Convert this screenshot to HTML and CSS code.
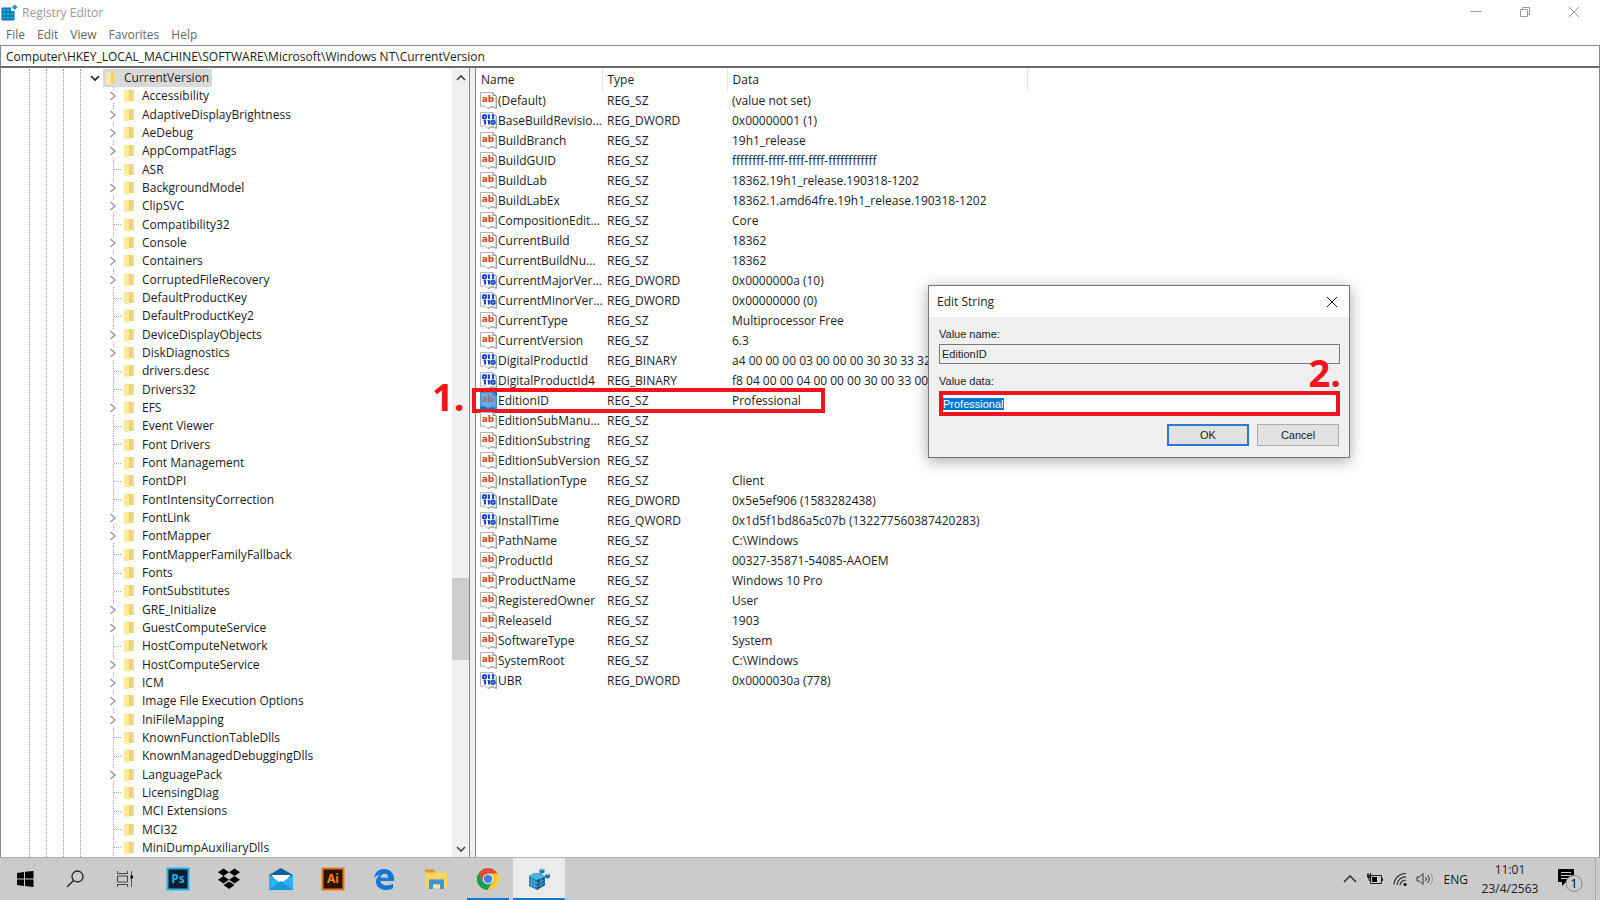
FILE: index.html
```html
<!DOCTYPE html>
<html lang="en">
<head>
  <meta charset="utf-8">
  <title>Registry Editor</title>
  <link rel="stylesheet" href="styles.css">
</head>
<body>
  <!-- shared icons -->
  <svg class="defs" aria-hidden="true">
    <symbol id="folder" viewBox="0 0 12 16">
      <path d="M1 2h10v11H1z" fill="#f6cf66"/>
      <path d="M1 1.500l5 1V15l-5-1.500z" fill="#ffe9a3"/>
      <path d="M9 2h2v11H9z" fill="#fbdc85"/>
    </symbol>
    <symbol id="right" viewBox="0 0 10 12">
      <path d="M2.500 2l4.500 4-4.500 4" fill="none" stroke="#999" stroke-width="1.500"/>
    </symbol>
    <symbol id="down" viewBox="0 0 10 10">
      <path d="M1 3l4 4 4-4" fill="none" stroke="currentColor" stroke-width="1.600"/>
    </symbol>
    <symbol id="up" viewBox="0 0 10 10">
      <path d="M1 7l4-4 4 4" fill="none" stroke="currentColor" stroke-width="1.600"/>
    </symbol>
    <symbol id="close" viewBox="0 0 12 12">
      <path d="M1 1l10 10M11 1L1 11" fill="none" stroke="currentColor"/>
    </symbol>
    <symbol id="page" viewBox="0 0 17 17">
      <path d="M.500.500h12.500l3 3v12.500c-2-.500-2.500-1.500-4-1.500s-2 1.500-4 1.500-2.500-2-4.500-2l-3 .500z" fill="#fafafa" stroke="#b4b4b4"/>
      <path d="M13 .500v3h3" fill="#ddd" stroke="#909090"/>
      <path d="M16.500 4v12.500c-2-.500-3-1.500-4.500-1.500s-2 1.500-4 1.500" fill="none" stroke="#a0a0a0"/>
    </symbol>
    <symbol id="bits" viewBox="0 0 17 17">
      <use href="#page"/>
      <g fill="none" stroke="#1a49d0" stroke-width="2">
        <circle cx="4.500" cy="4.700" r="1.700"/>
        <circle cx="13" cy="10.300" r="1.700"/>
        <path d="M9 2.500v4.500M13 2.500v4.500M5 8v4.500M9 8v4.500"/>
        <path d="M7.500 3H9M11.500 3H13M3.500 8.500H5M7.500 8.500H9" stroke-width="1"/>
      </g>
    </symbol>
  </svg>

  <header class="titlebar">
    <svg class="app-icon" viewBox="0 0 17 17">
      <path d="M1 4h12v12H1z" fill="#1aa7e0"/>
      <path d="M5 4v12M9 4v12M1 8h12M1 12h12M1 4h12v12H1z" fill="none" stroke="#0b6293"/>
      <path d="M10 3h4v4h-4z" fill="#fff"/>
      <path d="M13.500.500l3 2.500-2.500 3-3-2.500z" fill="#2b8fd0"/>
    </svg>
    <h1>Registry Editor</h1>
    <div class="window-buttons">
      <button aria-label="Minimize"><svg viewBox="0 0 12 12"><path d="M1 5.500h10" stroke="currentColor"/></svg></button>
      <button aria-label="Restore"><svg viewBox="0 0 12 12"><path d="M1.500 3.500h7v7h-7zM3.500 3.500v-2h7v7h-2" fill="none" stroke="currentColor"/></svg></button>
      <button aria-label="Close"><svg viewBox="0 0 12 12"><use href="#close"/></svg></button>
    </div>
  </header>

  <nav class="menubar">
    <button>File</button>
    <button>Edit</button>
    <button>View</button>
    <button>Favorites</button>
    <button>Help</button>
  </nav>

  <input class="address" type="text" aria-label="Address" value="Computer\HKEY_LOCAL_MACHINE\SOFTWARE\Microsoft\Windows NT\CurrentVersion">

  <main class="panes">
    <section class="tree-pane">
      <div class="guides"><i></i><i></i><i></i><i></i></div>
      <ul class="tree">
        <li class="root"><button aria-label="Collapse"><svg><use href="#down"/></svg></button><span class="key"><svg class="folder"><use href="#folder"/></svg>CurrentVersion</span></li>
        <li><button aria-label="Expand"><svg><use href="#right"/></svg></button><svg class="folder"><use href="#folder"/></svg>Accessibility</li>
        <li><button aria-label="Expand"><svg><use href="#right"/></svg></button><svg class="folder"><use href="#folder"/></svg>AdaptiveDisplayBrightness</li>
        <li><button aria-label="Expand"><svg><use href="#right"/></svg></button><svg class="folder"><use href="#folder"/></svg>AeDebug</li>
        <li><button aria-label="Expand"><svg><use href="#right"/></svg></button><svg class="folder"><use href="#folder"/></svg>AppCompatFlags</li>
        <li><i class="leaf"></i><svg class="folder"><use href="#folder"/></svg>ASR</li>
        <li><button aria-label="Expand"><svg><use href="#right"/></svg></button><svg class="folder"><use href="#folder"/></svg>BackgroundModel</li>
        <li><button aria-label="Expand"><svg><use href="#right"/></svg></button><svg class="folder"><use href="#folder"/></svg>ClipSVC</li>
        <li><i class="leaf"></i><svg class="folder"><use href="#folder"/></svg>Compatibility32</li>
        <li><button aria-label="Expand"><svg><use href="#right"/></svg></button><svg class="folder"><use href="#folder"/></svg>Console</li>
        <li><button aria-label="Expand"><svg><use href="#right"/></svg></button><svg class="folder"><use href="#folder"/></svg>Containers</li>
        <li><button aria-label="Expand"><svg><use href="#right"/></svg></button><svg class="folder"><use href="#folder"/></svg>CorruptedFileRecovery</li>
        <li><i class="leaf"></i><svg class="folder"><use href="#folder"/></svg>DefaultProductKey</li>
        <li><i class="leaf"></i><svg class="folder"><use href="#folder"/></svg>DefaultProductKey2</li>
        <li><button aria-label="Expand"><svg><use href="#right"/></svg></button><svg class="folder"><use href="#folder"/></svg>DeviceDisplayObjects</li>
        <li><button aria-label="Expand"><svg><use href="#right"/></svg></button><svg class="folder"><use href="#folder"/></svg>DiskDiagnostics</li>
        <li><i class="leaf"></i><svg class="folder"><use href="#folder"/></svg>drivers.desc</li>
        <li><i class="leaf"></i><svg class="folder"><use href="#folder"/></svg>Drivers32</li>
        <li><button aria-label="Expand"><svg><use href="#right"/></svg></button><svg class="folder"><use href="#folder"/></svg>EFS</li>
        <li><i class="leaf"></i><svg class="folder"><use href="#folder"/></svg>Event Viewer</li>
        <li><i class="leaf"></i><svg class="folder"><use href="#folder"/></svg>Font Drivers</li>
        <li><i class="leaf"></i><svg class="folder"><use href="#folder"/></svg>Font Management</li>
        <li><i class="leaf"></i><svg class="folder"><use href="#folder"/></svg>FontDPI</li>
        <li><i class="leaf"></i><svg class="folder"><use href="#folder"/></svg>FontIntensityCorrection</li>
        <li><button aria-label="Expand"><svg><use href="#right"/></svg></button><svg class="folder"><use href="#folder"/></svg>FontLink</li>
        <li><button aria-label="Expand"><svg><use href="#right"/></svg></button><svg class="folder"><use href="#folder"/></svg>FontMapper</li>
        <li><i class="leaf"></i><svg class="folder"><use href="#folder"/></svg>FontMapperFamilyFallback</li>
        <li><i class="leaf"></i><svg class="folder"><use href="#folder"/></svg>Fonts</li>
        <li><i class="leaf"></i><svg class="folder"><use href="#folder"/></svg>FontSubstitutes</li>
        <li><button aria-label="Expand"><svg><use href="#right"/></svg></button><svg class="folder"><use href="#folder"/></svg>GRE_Initialize</li>
        <li><button aria-label="Expand"><svg><use href="#right"/></svg></button><svg class="folder"><use href="#folder"/></svg>GuestComputeService</li>
        <li><i class="leaf"></i><svg class="folder"><use href="#folder"/></svg>HostComputeNetwork</li>
        <li><button aria-label="Expand"><svg><use href="#right"/></svg></button><svg class="folder"><use href="#folder"/></svg>HostComputeService</li>
        <li><button aria-label="Expand"><svg><use href="#right"/></svg></button><svg class="folder"><use href="#folder"/></svg>ICM</li>
        <li><button aria-label="Expand"><svg><use href="#right"/></svg></button><svg class="folder"><use href="#folder"/></svg>Image File Execution Options</li>
        <li><button aria-label="Expand"><svg><use href="#right"/></svg></button><svg class="folder"><use href="#folder"/></svg>IniFileMapping</li>
        <li><i class="leaf"></i><svg class="folder"><use href="#folder"/></svg>KnownFunctionTableDlls</li>
        <li><i class="leaf"></i><svg class="folder"><use href="#folder"/></svg>KnownManagedDebuggingDlls</li>
        <li><button aria-label="Expand"><svg><use href="#right"/></svg></button><svg class="folder"><use href="#folder"/></svg>LanguagePack</li>
        <li><i class="leaf"></i><svg class="folder"><use href="#folder"/></svg>LicensingDiag</li>
        <li><i class="leaf"></i><svg class="folder"><use href="#folder"/></svg>MCI Extensions</li>
        <li><i class="leaf"></i><svg class="folder"><use href="#folder"/></svg>MCI32</li>
        <li><i class="leaf"></i><svg class="folder"><use href="#folder"/></svg>MiniDumpAuxiliaryDlls</li>
      </ul>
      <div class="scrollbar">
        <button aria-label="Scroll up"><svg><use href="#up"/></svg></button>
        <div class="track"><div class="thumb"></div></div>
        <button aria-label="Scroll down"><svg><use href="#down"/></svg></button>
      </div>
    </section>

    <section class="value-pane">
      <table class="values">
        <colgroup><col class="col-name"><col class="col-type"><col class="col-data"></colgroup>
        <thead>
          <tr><th>Name</th><th>Type</th><th>Data</th></tr>
        </thead>
        <tbody>
          <tr><td><svg><use href="#page"/><text x="8" y="10" class="ab">ab</text></svg>(Default)</td><td>REG_SZ</td><td>(value not set)</td></tr>
          <tr><td><svg><use href="#bits"/></svg>BaseBuildRevisio...</td><td>REG_DWORD</td><td>0x00000001 (1)</td></tr>
          <tr><td><svg><use href="#page"/><text x="8" y="10" class="ab">ab</text></svg>BuildBranch</td><td>REG_SZ</td><td>19h1_release</td></tr>
          <tr><td><svg><use href="#page"/><text x="8" y="10" class="ab">ab</text></svg>BuildGUID</td><td>REG_SZ</td><td>ffffffff-ffff-ffff-ffff-ffffffffffff</td></tr>
          <tr><td><svg><use href="#page"/><text x="8" y="10" class="ab">ab</text></svg>BuildLab</td><td>REG_SZ</td><td>18362.19h1_release.190318-1202</td></tr>
          <tr><td><svg><use href="#page"/><text x="8" y="10" class="ab">ab</text></svg>BuildLabEx</td><td>REG_SZ</td><td>18362.1.amd64fre.19h1_release.190318-1202</td></tr>
          <tr><td><svg><use href="#page"/><text x="8" y="10" class="ab">ab</text></svg>CompositionEdit...</td><td>REG_SZ</td><td>Core</td></tr>
          <tr><td><svg><use href="#page"/><text x="8" y="10" class="ab">ab</text></svg>CurrentBuild</td><td>REG_SZ</td><td>18362</td></tr>
          <tr><td><svg><use href="#page"/><text x="8" y="10" class="ab">ab</text></svg>CurrentBuildNu...</td><td>REG_SZ</td><td>18362</td></tr>
          <tr><td><svg><use href="#bits"/></svg>CurrentMajorVer...</td><td>REG_DWORD</td><td>0x0000000a (10)</td></tr>
          <tr><td><svg><use href="#bits"/></svg>CurrentMinorVer...</td><td>REG_DWORD</td><td>0x00000000 (0)</td></tr>
          <tr><td><svg><use href="#page"/><text x="8" y="10" class="ab">ab</text></svg>CurrentType</td><td>REG_SZ</td><td>Multiprocessor Free</td></tr>
          <tr><td><svg><use href="#page"/><text x="8" y="10" class="ab">ab</text></svg>CurrentVersion</td><td>REG_SZ</td><td>6.3</td></tr>
          <tr><td><svg><use href="#bits"/></svg>DigitalProductId</td><td>REG_BINARY</td><td>a4 00 00 00 03 00 00 00 30 30 33 32</td></tr>
          <tr><td><svg><use href="#bits"/></svg>DigitalProductId4</td><td>REG_BINARY</td><td>f8 04 00 00 04 00 00 00 30 00 33 00</td></tr>
          <tr class="selected"><td><svg><use href="#page"/><text x="8" y="10" class="ab">ab</text></svg>EditionID<span class="step step-one">1.</span><span class="outline"></span></td><td>REG_SZ</td><td>Professional</td></tr>
          <tr><td><svg><use href="#page"/><text x="8" y="10" class="ab">ab</text></svg>EditionSubManu...</td><td>REG_SZ</td><td></td></tr>
          <tr><td><svg><use href="#page"/><text x="8" y="10" class="ab">ab</text></svg>EditionSubstring</td><td>REG_SZ</td><td></td></tr>
          <tr><td><svg><use href="#page"/><text x="8" y="10" class="ab">ab</text></svg>EditionSubVersion</td><td>REG_SZ</td><td></td></tr>
          <tr><td><svg><use href="#page"/><text x="8" y="10" class="ab">ab</text></svg>InstallationType</td><td>REG_SZ</td><td>Client</td></tr>
          <tr><td><svg><use href="#bits"/></svg>InstallDate</td><td>REG_DWORD</td><td>0x5e5ef906 (1583282438)</td></tr>
          <tr><td><svg><use href="#bits"/></svg>InstallTime</td><td>REG_QWORD</td><td>0x1d5f1bd86a5c07b (132277560387420283)</td></tr>
          <tr><td><svg><use href="#page"/><text x="8" y="10" class="ab">ab</text></svg>PathName</td><td>REG_SZ</td><td>C:\Windows</td></tr>
          <tr><td><svg><use href="#page"/><text x="8" y="10" class="ab">ab</text></svg>ProductId</td><td>REG_SZ</td><td>00327-35871-54085-AAOEM</td></tr>
          <tr><td><svg><use href="#page"/><text x="8" y="10" class="ab">ab</text></svg>ProductName</td><td>REG_SZ</td><td>Windows 10 Pro</td></tr>
          <tr><td><svg><use href="#page"/><text x="8" y="10" class="ab">ab</text></svg>RegisteredOwner</td><td>REG_SZ</td><td>User</td></tr>
          <tr><td><svg><use href="#page"/><text x="8" y="10" class="ab">ab</text></svg>ReleaseId</td><td>REG_SZ</td><td>1903</td></tr>
          <tr><td><svg><use href="#page"/><text x="8" y="10" class="ab">ab</text></svg>SoftwareType</td><td>REG_SZ</td><td>System</td></tr>
          <tr><td><svg><use href="#page"/><text x="8" y="10" class="ab">ab</text></svg>SystemRoot</td><td>REG_SZ</td><td>C:\Windows</td></tr>
          <tr><td><svg><use href="#bits"/></svg>UBR</td><td>REG_DWORD</td><td>0x0000030a (778)</td></tr>
        </tbody>
      </table>
    </section>
  </main>

  <form class="dialog" role="dialog" aria-labelledby="dialog-title">
    <div class="dialog-title">
      <h2 id="dialog-title">Edit String</h2>
      <button type="button" aria-label="Close"><svg viewBox="0 0 12 12"><use href="#close"/></svg></button>
    </div>
    <div class="dialog-body">
      <label for="value-name">Value name:</label>
      <input type="text" id="value-name" value="EditionID" readonly>
      <label for="value-data">Value data:</label>
      <input type="text" id="value-data" value="Professional">
      <div class="dialog-buttons">
        <button type="button" class="default">OK</button>
        <button type="button">Cancel</button>
      </div>
    </div>
    <span class="step step-two">2.</span>
  </form>

  <footer class="taskbar">
    <div class="system">
      <button aria-label="Start"><svg viewBox="0 0 24 24"><path d="M4 6l7-1v6.500H4zM12 4.800L20.500 4v7.500H12zM4 12.500h7V19l-7-1zM12 12.500h8.500V20L12 19z"/></svg></button>
      <button aria-label="Search"><svg viewBox="0 0 24 24"><circle cx="14.500" cy="9.500" r="5.500" fill="none" stroke="#222" stroke-width="1.300"/><path d="M10.500 13.500L4 20" stroke="#222" stroke-width="1.500"/></svg></button>
      <button aria-label="Task view"><svg viewBox="0 0 24 24"><path d="M4.500 4v2.500h10V4M4.500 20v-2.500h10V20M4.500 9h10v6h-10z" fill="none" stroke="#444"/><path d="M18.500 4v16" stroke="#555"/><path d="M17.500 8.500h2.500v3h-2.500z"/></svg></button>
    </div>
    <div class="apps">
      <button aria-label="Photoshop"><svg viewBox="0 0 24 24"><path d="M1.500 1.500h21v21h-21z" fill="#0b1d2c" stroke="#1eb4f0" stroke-width="2"/><text x="12" y="16" class="adobe ps">Ps</text></svg></button>
      <button aria-label="Dropbox"><svg viewBox="0 0 24 24"><path d="M6.500 1.500l5.500 3.700-5.500 3.700L1 5.200zM17.500 1.500L23 5.200l-5.500 3.700L12 5.200zM6.500 9l5.500 3.700-5.500 3.700L1 12.700zM17.500 9l5.500 3.700-5.500 3.700-5.500-3.700zM12 14.500l5.500 3.600L12 22l-5.500-3.900z"/></svg></button>
      <button aria-label="Mail"><svg viewBox="0 0 24 24"><path d="M0 8l12-7 12 7v3H0z" fill="#0b5ea8"/><path d="M2 8h20l-9 9h-2z" fill="#fff"/><path d="M0 8l12 8 12-8v15H0z" fill="#2bb3f0"/><path d="M0 23l12-9 12 9z" fill="#1796dd"/></svg></button>
      <button aria-label="Illustrator"><svg viewBox="0 0 24 24"><path d="M1.500 1.500h21v21h-21z" fill="#2a1204" stroke="#e8780c" stroke-width="2"/><text x="12" y="16" class="adobe ai">Ai</text></svg></button>
      <button aria-label="Edge"><svg viewBox="0 0 24 24"><path d="M2 11C3 5 7 2 12.300 2 18.500 2 22 6.500 22 12v2H8.500c.300 3 3 4.500 6.200 4.500 2.300 0 4.500-.700 6.300-1.700v4.400c-2 1.100-4.500 1.800-7.300 1.800C8 23 4 19.500 4 14.800c0-3 1.700-5.600 4.300-7C5.500 8.200 3.300 9.200 2 11zm6.600-.300h7.600C16.200 8.200 15 6.700 12.600 6.700c-2.200 0-3.700 1.600-4 4z" fill="#0f78d4"/></svg></button>
      <button aria-label="File Explorer"><svg viewBox="0 0 24 24"><path d="M1 3h10l1 2h11v16H1z" fill="#f9d262"/><path d="M1 2.500h10v3H1z" fill="#dd9a22"/><path d="M5 12.500h15V22h-4v-4.500H9V22H5z" fill="#3d94d6"/><path d="M9 17.500h7V21H9z" fill="#fbe3a0"/></svg></button>
      <button aria-label="Chrome" class="running"><svg viewBox="0 0 24 24"><circle cx="12" cy="12" r="11" fill="#fcc934"/><path d="M12 12L2.500 6.500A11 11 0 0 1 21.500 6.500H12z" fill="#dd4b3e"/><path d="M2.500 6.500A11 11 0 0 0 11.500 23L16.800 14.500 12 12 7.300 14.700z" fill="#1a9c57"/><path d="M2.500 6.500L7 14l5-7.500z" fill="#dd4b3e"/><path d="M2.500 6.500a11 11 0 0 0-.300 10.400L6 13z" fill="#1a9c57"/><circle cx="12" cy="12" r="5.200" fill="#f2f2f2"/><circle cx="12" cy="12" r="4.200" fill="#3f7fe8"/></svg></button>
      <button aria-label="Registry Editor" class="running active"><svg viewBox="0 0 24 24"><path d="M2 9l5-3h7l4 4v8l-8 5-8-4z" fill="#1c7fb5"/><path d="M2 9l5-3h7l4 4-8 3z" fill="#4fb4e0"/><path d="M10 13l8-3v8l-8 5z" fill="#0d5684"/><path d="M4.700 10.500v9M7.300 12v10M2 12.500l8 4 8-4M2 16l8 3.500 8-4M14 11.500v9" fill="none" stroke="#6fcbea" stroke-width=".600"/><path d="M12.500 2.500l2.500-1 2.500 1v3l-2.500 1-2.500-1zM18 7.500l2.500-1 2.500 1v3l-2.500 1-2.500-1z" fill="#1574aa"/><path d="M12.500 2.500l2.500-1 2.500 1-2.500 1zM18 7.500l2.500-1 2.500 1-2.500 1z" fill="#7bd2f0"/></svg></button>
    </div>
    <div class="tray">
      <button aria-label="Show hidden icons"><svg viewBox="0 0 18 18"><path d="M3 12l6-6 6 6" fill="none" stroke="#222" stroke-width="1.300"/></svg></button>
      <button aria-label="Battery"><svg viewBox="0 0 18 18"><path d="M4.500 5.500h11v8h-11zM16.500 8v3" fill="none" stroke="#222"/><path d="M6 7h5v5H6z"/><path d="M1 4.500h4.500V7L4 8.500H2.500L1 7z" fill="#222"/><path d="M2 3v2M4.500 3v2M3 8v2.500h2" fill="none" stroke="#222"/></svg></button>
      <button aria-label="Network"><svg viewBox="0 0 18 18"><g fill="none" stroke="#333" stroke-width="1.200"><path d="M3 14.500A11.500 11.500 0 0 1 15 3.500M6 15A8.500 8.500 0 0 1 15 6.800M9 15.300a5.500 5.500 0 0 1 6-5"/></g><circle cx="14" cy="14.500" r="1.600"/></svg></button>
      <button aria-label="Volume"><svg viewBox="0 0 18 18"><g fill="none" stroke="#333"><path d="M1 7h2.500L7 3.500v11L3.500 11H1zM9.500 7a3 3 0 0 1 0 4M11.500 5a5.500 5.500 0 0 1 0 8"/><path d="M14 3a8.500 8.500 0 0 1 0 12" stroke="#999"/></g></svg></button>
      <button class="lang">ENG</button>
      <button class="clock"><span>11:01</span><span>23/4/2563</span></button>
      <button class="notify" aria-label="Notifications"><svg viewBox="0 0 26 26"><path d="M1 3h16v13H9l-4 4v-4H1z"/><path d="M4 6.500h10M4 9.500h10M4 12.500h7" stroke="#ccc"/><circle cx="17" cy="17.500" r="8" fill="#cbcbcb" stroke="#888"/><text x="17" y="22" class="count">1</text></svg></button>
    </div>
  </footer>

  <script>
    // the value is preselected when the dialog opens
    const valueData = document.getElementById('value-data');
    valueData.focus();
    valueData.select();
  </script>
</body>
</html>
```
FILE: styles.css
```css
* { box-sizing: border-box; }
body {
  margin: 0;
  min-height: 100vh;
  display: flex;
  flex-direction: column;
  position: relative;
  background: #fff;
  color: #1c1c1c;
  font-family: "Open Sans", "Noto Sans", sans-serif;
  font-size: 12px;
}
button {
  padding: 0;
  border: none;
  background: none;
  color: inherit;
  font: inherit;
}
h1, h2 {
  margin: 0;
  font-size: 12px;
  font-weight: 400;
}
svg { display: block; }
.defs { position: absolute; width: 0; height: 0; }

/* title and menu */
.titlebar {
  display: flex;
  align-items: center;
  height: 24px;
  padding: 0 2px 0 1px;
  color: #999;
}
.app-icon { width: 17px; height: 17px; margin-right: 4px; }
.window-buttons { display: flex; margin-left: auto; }
.window-buttons button {
  display: flex;
  justify-content: center;
  width: 49px;
}
.window-buttons svg { width: 12px; height: 12px; }
.menubar {
  display: flex;
  gap: 12px;
  height: 21px;
  padding-left: 6px;
  color: #666;
}
.address {
  height: 23px;
  padding: 0 5px;
  border: 1px solid #828790;
  border-bottom: 2px solid #6a6a70;
  outline: none;
  color: #1c1c1c;
  font: inherit;
}

/* panes */
.panes { flex: 1; display: flex; background: #f0f0f0; gap: 5px; }
.tree-pane {
  display: flex;
  width: 470px;
  padding-top: 1px;
  border-left: 1px solid #828790;
  border-right: 1px solid #828790;
  background: #fff;
}
.guides { display: flex; gap: 16px; padding-left: 28px; }
.guides i { border-left: 1px dotted #999; }
.tree {
  flex: 1;
  display: flex;
  flex-direction: column;
  margin: 0;
  padding: 0 0 0 24px;
  list-style: none;
}
.tree li {
  flex: 1;
  display: flex;
  align-items: center;
  line-height: 18px;
}
.tree button { display: flex; justify-content: center; width: 16px; }
.tree button svg { width: 10px; height: 12px; background: #fff; }
.tree .folder { width: 12px; height: 16px; margin: 0 7px 0 2px; }
.tree .root { margin-left: -18px; }
.tree .root button svg { height: 10px; }
.key {
  display: flex;
  align-items: center;
  padding-right: 3px;
  background: #d9d9d9;
}
.tree li:not(.root) button, .leaf {
  align-self: stretch;
  align-items: center;
  background: repeating-linear-gradient(#aaa 0 1px, #fff 1px 2px) 8px 0 / 1px 100% no-repeat;
}
.leaf {
  display: flex;
  width: 16px;
}
.leaf::after {
  content: "";
  width: 7px;
  margin-left: 9px;
  border-top: 1px dotted #aaa;
}
.scrollbar {
  display: flex;
  flex-direction: column;
  width: 17px;
  background: #f0f0f0;
}
.scrollbar button {
  display: flex;
  justify-content: center;
  align-items: center;
  height: 17px;
  color: #444;
}
.scrollbar svg { width: 10px; height: 10px; }
.track {
  flex: 1;
  display: grid;
  grid-template-rows: 492fr 82fr 180fr;
}
.thumb { grid-row: 2; background: #cdcdcd; }

/* value list */
.value-pane {
  flex: 1;
  border-left: 1px solid #828790;
  border-right: 1px solid #828790;
  background: #fff;
}
.values { width: 551px; table-layout: fixed; border-collapse: collapse; }
.col-name { width: 126px; }
.col-type { width: 125px; }
.col-data { width: 300px; }
.values th {
  height: 23px;
  padding: 0 5px;
  border-right: 1px solid #e5e5e5;
  font-weight: 400;
  text-align: left;
}
.values td {
  position: relative;
  height: 20px;
  padding: 0 0 0 5px;
  line-height: 20px;
  white-space: nowrap;
}
.values td:first-child { padding-left: 4px; }
.values td svg {
  float: left;
  width: 17px;
  height: 17px;
  margin: 1px 1px 0 0;
}
.ab {
  fill: #d8431f;
  font: bold 9px "DejaVu Sans", sans-serif;
  text-anchor: middle;
}
.selected svg { background: #0078d7; }
.selected use { opacity: .4; }
.selected .ab { opacity: .6; }

/* numbered steps */
.step {
  position: absolute;
  color: #f0141e;
  font-size: 38px;
  font-weight: 700;
  line-height: 38px;
}
.step-one { left: -44px; top: -14px; }
.step-two { right: 8px; top: 67px; }
.outline {
  position: absolute;
  left: -4px;
  top: -3px;
  width: 353px;
  height: 25px;
  border: 4px solid #f0141e;
}

/* edit dialog */
.dialog {
  position: absolute;
  left: 928px;
  top: 285px;
  width: 422px;
  border: 1px solid #777;
  background: #f0f0f0;
  box-shadow: 0 3px 14px rgba(0, 0, 0, .35);
}
.dialog-title {
  display: flex;
  align-items: center;
  justify-content: space-between;
  height: 31px;
  padding: 0 11px 0 8px;
  background: #fff;
}
.dialog-title svg { width: 12px; height: 12px; }
.dialog-body {
  display: flex;
  flex-direction: column;
  padding: 7px 9px 11px 10px;
  font-family: "Liberation Sans", Arial, sans-serif;
  font-size: 11px;
}
.dialog label { line-height: 20px; }
.dialog input {
  height: 20px;
  padding: 0 2px;
  border: 1px solid #7a7a7a;
  background: #f0f0f0;
  outline: none;
  color: #222;
  font: inherit;
}
.dialog #value-name { margin-bottom: 7px; }
.dialog #value-data {
  height: 25px;
  padding: 0;
  border: 4px solid #f0141e;
  background: #fff;
}
.dialog input::selection { background: #0078d7; color: #fff; }
.dialog-buttons {
  display: flex;
  justify-content: flex-end;
  gap: 8px;
  margin-top: 8px;
  padding-right: 1px;
}
.dialog-buttons button {
  width: 82px;
  height: 22px;
  border: 1px solid #adadad;
  background: #e1e1e1;
}
.dialog-buttons .default { border: 2px solid #2f78d2; }

/* taskbar */
.taskbar {
  display: flex;
  height: 43px;
  border-top: 1px solid #b0b0b0;
  background: #cbcbcb;
}
.taskbar button {
  display: flex;
  align-items: center;
  justify-content: center;
}
.system { display: flex; }
.system button { width: 50px; }
.taskbar svg { width: 24px; height: 24px; }
.apps { display: flex; width: 413px; margin-left: 2px; }
.apps button { flex: 1; }
.running { background: linear-gradient(#0f78d4, #0f78d4) center bottom / 42px 2px no-repeat; }
.active { background-color: #ebebeb; background-size: 100% 2px; }
.adobe {
  font: bold 12px "Noto Sans", sans-serif;
  text-anchor: middle;
}
.ps { fill: #1eb4f0; }
.ai { fill: #f08218; }
.tray {
  display: flex;
  gap: 7px;
  margin-left: auto;
  padding-right: 4px;
}
.tray svg { width: 18px; height: 18px; }
.tray .lang { margin-left: 3px; }
.tray .clock {
  flex-direction: column;
  width: 70px;
  line-height: 19px;
}
.tray .notify {
  width: 44px;
  padding-right: 8px;
  border-right: 1px solid #aaa;
}
.tray .notify svg { width: 26px; height: 26px; }
.count {
  font: 13px "Open Sans", sans-serif;
  text-anchor: middle;
}
```
